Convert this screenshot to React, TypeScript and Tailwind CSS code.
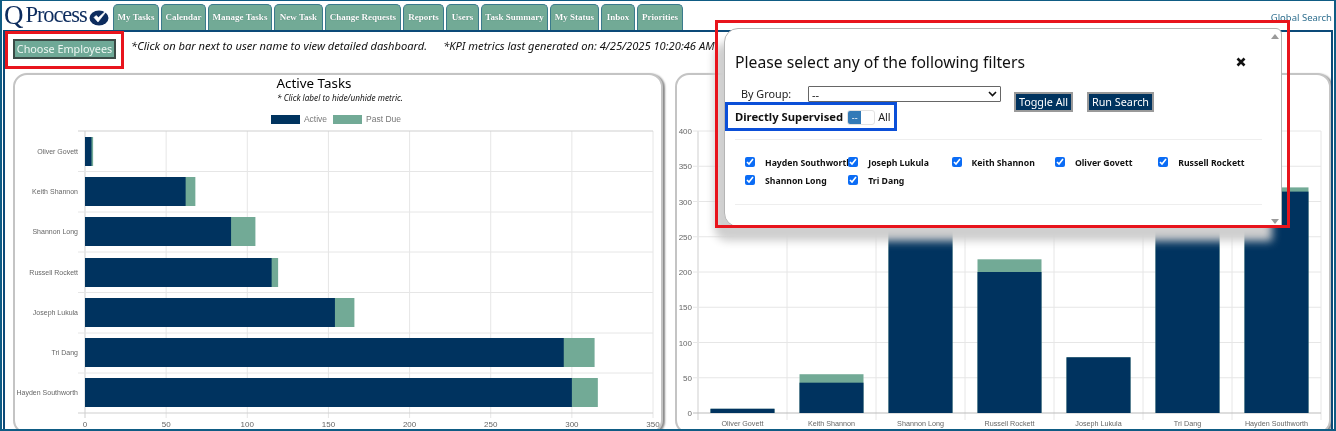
const tabs = [
  { label: "My Tasks", w: "w-[46px]" },
  { label: "Calendar", w: "w-[45px]" },
  { label: "Manage Tasks", w: "w-[64px]" },
  { label: "New Task", w: "w-[49px]" },
  { label: "Change Requests", w: "w-[76px]" },
  { label: "Reports", w: "w-[41px]" },
  { label: "Users", w: "w-[33px]" },
  { label: "Task Summary", w: "w-[67px]" },
  { label: "My Status", w: "w-[49px]" },
  { label: "Inbox", w: "w-[34px]" },
  { label: "Priorities", w: "w-[46px]" },
];

const NAVY = "#00335f";
const GREEN = "#72aa96";
const GRID = "#e6e6e6";
const AXIS = "#cfcfcf";
const LABEL = "#666666";
const chartFont = "'Liberation Sans', Arial, sans-serif";

const hBars = [
  { name: "Oliver Govett", a: 4, t: 5, y: 137 },
  { name: "Keith Shannon", a: 62, t: 68, y: 177 },
  { name: "Shannon Long", a: 90, t: 105, y: 217 },
  { name: "Russell Rockett", a: 115, t: 119, y: 258 },
  { name: "Joseph Lukula", a: 154, t: 166, y: 298 },
  { name: "Tri Dang", a: 295, t: 314, y: 338 },
  { name: "Hayden Southworth", a: 300, t: 316, y: 378 },
];

const vBars = [
  { name: "Oliver Govett", a: 6, t: 6 },
  { name: "Keith Shannon", a: 43, t: 55 },
  { name: "Shannon Long", a: 280, t: 295 },
  { name: "Russell Rockett", a: 200, t: 218 },
  { name: "Joseph Lukula", a: 79, t: 79 },
  { name: "Tri Dang", a: 295, t: 310 },
  { name: "Hayden Southworth", a: 314, t: 320 },
];

const people = [
  "Hayden Southworth",
  "Joseph Lukula",
  "Keith Shannon",
  "Oliver Govett",
  "Russell Rockett",
  "Shannon Long",
  "Tri Dang",
];

function HorizontalChart() {
  const sx = (v: number) => 85 + v * 1.6229;
  const rows = [131, 171.5, 212, 252, 292.5, 333, 373, 413];
  return (
    <svg className="block" width="646" height="303" viewBox="15 128 646 303">
      {[0, 50, 100, 150, 200, 250, 300, 350].map((v) => (
        <g key={v}>
          <line x1={sx(v)} x2={sx(v)} y1={131} y2={418} stroke={v === 0 ? AXIS : GRID} />
          <text x={sx(v)} y={427} textAnchor="middle" fontSize="8" fill={LABEL} fontFamily={chartFont}>
            {v}
          </text>
        </g>
      ))}
      {rows.map((y) => (
        <line key={y} x1={78} x2={653} y1={y} y2={y} stroke={y === 131 || y === 413 ? AXIS : GRID} />
      ))}
      {hBars.map((b) => (
        <g key={b.name}>
          <rect x={85} y={b.y} width={sx(b.t) - 85} height={29} fill={GREEN} />
          <rect x={85} y={b.y} width={sx(b.a) - 85} height={29} fill={NAVY} />
          <text x={78} y={b.y + 17} textAnchor="end" fontSize="7" fill={LABEL} fontFamily={chartFont}>
            {b.name}
          </text>
        </g>
      ))}
    </svg>
  );
}

function VerticalChart() {
  const sy = (v: number) => 413 - v * 0.705;
  const cols = [698, 787, 876, 965, 1054, 1143, 1232, 1321];
  return (
    <svg className="block" width="652" height="303" viewBox="677 128 652 303">
      {cols.map((x) => (
        <line key={x} x1={x} x2={x} y1={131} y2={420} stroke={x === 698 ? AXIS : GRID} />
      ))}
      {[0, 50, 100, 150, 200, 250, 300, 350, 400].map((v) => (
        <g key={v}>
          <line x1={693} x2={1321} y1={sy(v)} y2={sy(v)} stroke={v === 0 ? "#bbbbbb" : GRID} />
          <text x={692} y={sy(v) + 3} textAnchor="end" fontSize="8" fill={LABEL} fontFamily={chartFont}>
            {v}
          </text>
        </g>
      ))}
      {vBars.map((b, i) => {
        const x = 710.5 + i * 89;
        return (
          <g key={b.name}>
            <rect x={x} y={sy(b.t)} width={64} height={413 - sy(b.t)} fill={GREEN} />
            <rect x={x} y={sy(b.a)} width={64} height={413 - sy(b.a)} fill={NAVY} />
            <text x={x + 32} y={426} textAnchor="middle" fontSize="7.2" fill={LABEL} fontFamily={chartFont}>
              {b.name}
            </text>
          </g>
        );
      })}
    </svg>
  );
}

function Logo() {
  return (
    <div className="w-[111px] h-[29px] shrink-0 flex items-center pl-[2px] text-[#0d2c5e] font-['Liberation_Serif',serif] leading-none">
      <span className="text-[27px] leading-none -tracking-[1px]">Q</span>
      <span className="text-[22.5px] leading-none ml-[3px] tracking-[-1.1px]">Process</span>
      <svg className="ml-[2px] mt-[1px] shrink-0" width="21" height="20" viewBox="0 0 21 20">
        <ellipse cx="10" cy="12" rx="9.5" ry="7.5" fill="#0d2c5e" />
        <path d="M5 11.5 L9 16 L19.5 2.5 L9.5 11.5 L7 9.5 Z" fill="#ffffff" stroke="#ffffff" strokeWidth="0.6" />
      </svg>
    </div>
  );
}

export default function App() {
  return (
    <div className="relative w-[1336px] h-[431px] overflow-hidden bg-white font-['Noto_Sans','Open_Sans',sans-serif] blur-[0.35px]">
      <div className="h-full flex flex-col border-t border-x-2 border-b-2 border-[#0f5c84]">
        <header className="h-[29px] shrink-0 flex items-end">
          <Logo />
          <nav className="flex gap-[2px] h-[26px]">
            {tabs.map((t) => (
              <div
                key={t.label}
                className={`${t.w} flex items-center justify-center rounded-t-[5px] border border-b-0 border-[#3a7a8c] bg-[#72aa96] text-white text-[9px] font-bold whitespace-nowrap font-['Liberation_Serif',serif] [text-shadow:0_0_1px_#3d6f60]`}
              >
                {t.label}
              </div>
            ))}
          </nav>
          <span className="ml-auto mr-[2px] mb-[8px] text-[9.5px] leading-none text-[#2f6f8f]">Global Search</span>
        </header>
        <main className="flex-1 min-h-0 mx-px overflow-hidden border-t-2 border-x-2 border-[#0c4a78]">
          <div className="h-[41px] flex items-start pl-[8px] pt-[7px]">
            <button className="w-[103px] h-[20px] bg-[#6fa997] border-2 border-[#3b4a46] text-[#eef6f2] text-[10.8px] leading-none whitespace-nowrap">
              Choose Employees
            </button>
            <p className="ml-[15px] -mt-[1px] text-[11.15px] leading-[16px] italic text-[#111] whitespace-nowrap">
              *Click on bar next to user name to view detailed dashboard.
              <span className="ml-[16px]">*KPI metrics last generated on: 4/25/2025 10:20:46 AM</span>
            </p>
          </div>
          <div className="flex gap-[12px] pl-[8px]">
            <section className="w-[650px] h-[361px] rounded-[14px] border-2 border-[#c4c4c4] shadow-[2px_1px_2px_#8a8a8a] bg-white">
              <div className="h-[53px] flex flex-col items-center">
                <h2 className="mr-[48px] text-[13.4px] leading-[17px] text-black">Active Tasks</h2>
                <p className="ml-[4px] text-[8.2px] leading-[11px] italic text-[#111]">* Click label to hide/unhide metric.</p>
                <div className="flex items-center mr-[4px] mt-[12px] text-[8.5px] leading-none text-[#777] font-['Liberation_Sans',sans-serif]">
                  <span className="w-[29px] h-[9px] bg-[#00335f]" />
                  <span className="ml-[4px]">Active</span>
                  <span className="ml-[6px] w-[29px] h-[9px] bg-[#72aa96]" />
                  <span className="ml-[4px]">Past Due</span>
                </div>
              </div>
              <HorizontalChart />
            </section>
            <section className="w-[656px] h-[361px] rounded-[14px] border-2 border-[#c4c4c4] shadow-[2px_1px_2px_#8a8a8a] bg-white">
              <div className="h-[53px]" />
              <VerticalChart />
            </section>
          </div>
        </main>
      </div>

      {/* filter popup */}
      <div className="absolute left-[724px] top-[28px] w-[558px] h-[199px] rounded-[14px] rounded-tr-[6px] rounded-br-none border border-[#b5b5b5] bg-white shadow-[-10px_14px_8px_#cfcfcf] pl-[10px]">
        <div className="pt-[21px] h-[57px] flex justify-between pr-[35px]">
          <h3 className="text-[15.7px] leading-[24px] text-[#111] whitespace-nowrap">Please select any of the following filters</h3>
          <svg className="mt-[7px]" width="10" height="10" viewBox="0 0 10 10">
            <path d="M1.5 1.5 L8.5 8.5 M8.5 1.5 L1.5 8.5" stroke="#111" strokeWidth="2.6" />
          </svg>
        </div>
        <div className="h-[23px] flex items-start pl-[6px]">
          <span className="w-[67px] text-[10.8px] leading-[16px] text-[#222]">By Group:</span>
          <div className="w-[193px] h-[16px] border border-[#666] rounded-[1px] flex items-center justify-between px-[3px] text-[11px] leading-none text-[#222]">
            <span>--</span>
            <svg width="9" height="6" viewBox="0 0 9 6">
              <path d="M1 1 L4.5 4.5 L8 1" fill="none" stroke="#111" strokeWidth="1.6" />
            </svg>
          </div>
          <button className="ml-[13px] mt-[6px] w-[59px] h-[20px] bg-[#00335f] border-2 border-[#9a9a9a] text-white text-[10.8px] leading-none whitespace-nowrap">
            Toggle All
          </button>
          <button className="ml-[14px] mt-[6px] w-[67px] h-[20px] bg-[#00335f] border-2 border-[#9a9a9a] text-white text-[10.8px] leading-none whitespace-nowrap">
            Run Search
          </button>
        </div>
        <div className="h-[16px] flex items-center">
          <span className="text-[11.25px] leading-none font-bold text-[#111] whitespace-nowrap">Directly Supervised</span>
          <span className="ml-[4px] w-[28px] h-[15px] flex rounded-[3px] border border-[#e2e2e2] overflow-hidden">
            <span className="w-[13px] bg-[#337ab7] text-white text-[9px] leading-[13px] text-center">--</span>
          </span>
          <span className="ml-[3px] text-[10.8px] leading-none text-[#222]">All</span>
        </div>
        <div className="mt-[14px] w-[527px] border-t border-[#eeeeee] pt-[13px] pl-[10px] h-[65px]">
          <div className="grid grid-cols-[103.3px_103.3px_103.3px_103.3px_103.3px]">
            {people.map((p) => (
              <label key={p} className="h-[18px] flex items-center whitespace-nowrap text-[8.7px] leading-none font-bold text-[#111]">
                <input type="checkbox" defaultChecked className="m-0 w-[10px] h-[10px] accent-[#0b6cf5]" />
                <span className="ml-[10px] mt-[2px]">{p}</span>
              </label>
            ))}
          </div>
        </div>
        <div className="w-[527px] border-t border-[#eeeeee]" />
        <span className="absolute right-[2px] top-[5px] w-0 h-0 border-x-[4px] border-x-transparent border-b-[5px] border-b-[#9a9a9a]" />
        <span className="absolute right-[2px] bottom-[2px] w-0 h-0 border-x-[4px] border-x-transparent border-t-[5px] border-t-[#9a9a9a]" />
      </div>

      {/* annotation boxes */}
      <div className="absolute left-[5px] top-[31px] w-[119px] h-[38px] border-[3px] border-[#e8141c]" />
      <div className="absolute left-[715px] top-[20px] w-[575px] h-[208px] border-[3px] border-[#e8141c]" />
      <div className="absolute left-[725px] top-[102px] w-[172px] h-[29px] border-[3px] border-[#0b4fd8]" />
    </div>
  );
}
